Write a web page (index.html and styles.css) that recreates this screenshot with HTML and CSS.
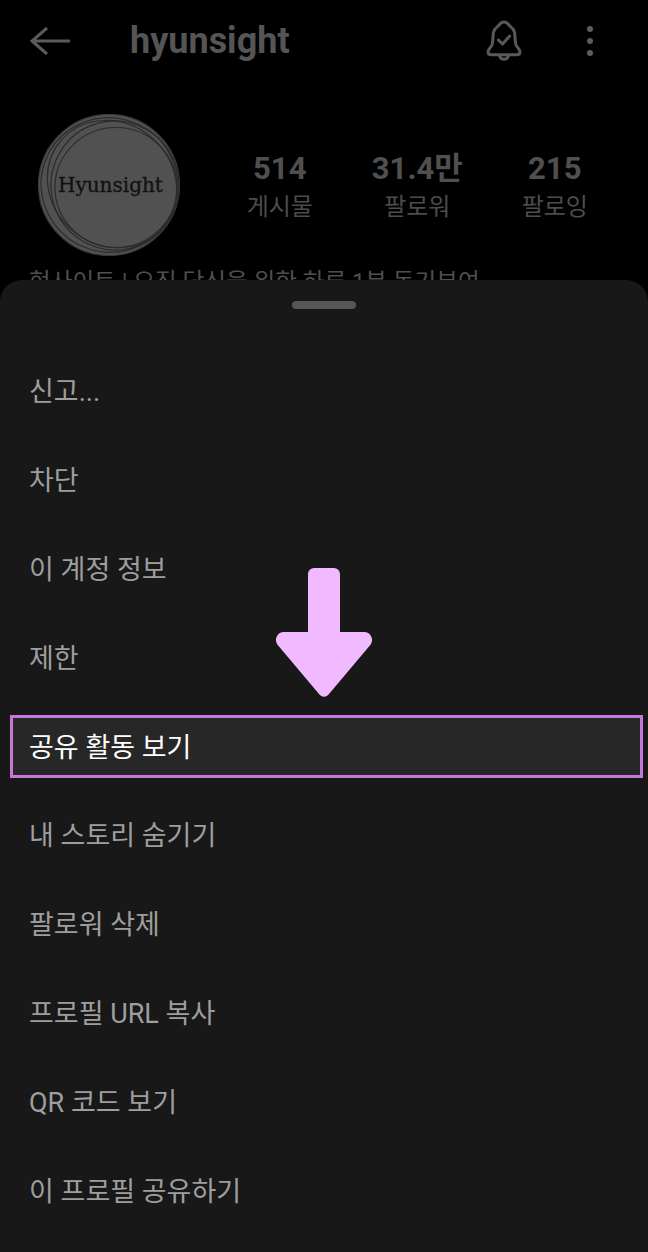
FILE: index.html
```html
<!DOCTYPE html>
<html lang="ko">
<head>
<meta charset="utf-8">
<title>hyunsight</title>
<link rel="stylesheet" href="styles.css">
</head>
<body>
<div class="screen">
  <header class="topbar">
    <svg class="back" viewBox="0 0 42 32" width="42" height="32"><path d="M18 3 3 16l15 13M3 16h38"/></svg>
    <h1 class="name">hyunsight</h1>
    <svg class="bell" viewBox="0 0 36 42" width="36" height="42"><path d="M18 2c-2 0-3.500 1-4.800 3-1.700 2-5 3-5.800 7.500-.7 4.500-.2 9-1.400 12.500-.8 2.200-4 3.800-4 6.800 0 2 1.400 3 3.400 3h25.200c2 0 3.400-1 3.400-3 0-3-3.200-4.600-4-6.800-1.200-3.500-.7-8-1.400-12.500C27.800 8 24.500 7 22.800 5 21.500 3 20 2 18 2Z"/><path d="M13.500 35.500c.6 2.500 2.300 3.800 4.500 3.800s3.900-1.300 4.500-3.800"/><path d="m12.500 20 4 4 7-7.800"/></svg>
    <div class="dots"><i></i><i></i><i></i></div>
  </header>
  <section class="profile">
    <div class="avatar">
      <svg class="rings" viewBox="0 0 142 142" width="142" height="142"><circle cx="71" cy="71" r="70.500" class="disc"/><ellipse cx="78" cy="73.500" rx="61" ry="60"/><ellipse cx="77" cy="71.500" rx="64" ry="64.500" transform="rotate(-15 77 71.500)"/><ellipse cx="71.500" cy="71" rx="68.500" ry="67" transform="rotate(20 71.500 71)"/><ellipse cx="74" cy="70" rx="67" ry="61" transform="rotate(40 74 70)"/></svg>
      <span class="logo">Hyunsight</span>
    </div>
    <ul class="stats">
      <li class="stat"><b>514</b><span>게시물</span></li>
      <li class="stat"><b>31.4만</b><span>팔로워</span></li>
      <li class="stat"><b>215</b><span>팔로잉</span></li>
    </ul>
  </section>
  <p class="bio">현사이트 | 오직 당신을 위한 하루 1분 동기부여</p>

  <div class="sheet">
    <div class="handle"></div>
    <ul class="menu">
      <li class="item">신고...</li>
      <li class="item">차단</li>
      <li class="item">이 계정 정보</li>
      <li class="item">제한</li>
      <li class="item active"><span>공유 활동 보기</span></li>
      <li class="item">내 스토리 숨기기</li>
      <li class="item">팔로워 삭제</li>
      <li class="item">프로필 URL 복사</li>
      <li class="item">QR 코드 보기</li>
      <li class="item">이 프로필 공유하기</li>
    </ul>
  </div>

  <svg class="arrow" viewBox="0 0 96 130" width="96" height="130"><path d="M38 0h20a6 6 0 0 1 6 6v58h24a8 8 0 0 1 6.700 12.400L53 126a6 6 0 0 1-10 0L1.300 76.400A8 8 0 0 1 8 64h24V6a6 6 0 0 1 6-6Z"/></svg>
</div>
</body>
</html>
```
FILE: styles.css
```css
* { box-sizing: border-box; }
html, body { margin: 0; padding: 0; background: #000; }
ul { list-style: none; margin: 0; padding: 0; }
.screen {
  position: relative;
  width: 648px;
  height: 1252px;
  overflow: hidden;
  background: #000;
  font-family: Roboto, "Noto Sans CJK KR", sans-serif;
}
.topbar {
  display: flex;
  align-items: center;
  height: 82px;
  padding: 0 0 0 29px;
}
.back { fill: none; stroke: #5a5a5a; stroke-width: 3; flex: none; }
.name {
  margin: 0 0 0 59px;
  flex: 1;
  font-size: 36px;
  font-weight: 700;
  color: #555;
}
.bell { fill: none; stroke: #595959; stroke-width: 3; stroke-linejoin: round; stroke-linecap: round; flex: none; margin-right: 65px; margin-bottom: 1px; }
.dots { display: flex; flex-direction: column; gap: 6px; margin-right: 55px; }
.dots i { display: block; width: 6px; height: 6px; border-radius: 50%; background: #5c5c5c; }

.profile {
  display: flex;
  align-items: center;
  height: 142px;
  margin-top: 32px;
  padding-left: 38px;
}
.avatar { position: relative; width: 142px; height: 142px; flex: none; }
.rings { display: block; fill: none; stroke: #2c2c2c; stroke-width: 1.200; }
.rings .disc { fill: #515151; stroke: #3a3a3a; }
.logo {
  position: absolute;
  left: 20px;
  top: 59px;
  font-family: "DejaVu Serif", serif;
  font-size: 20px;
  -webkit-text-stroke: 0.3px #111;
  color: #111;
  line-height: 24px;
}
.stats { display: flex; margin-left: 31px; }
.stat { display: flex; flex-direction: column; align-items: center; width: 137.500px; margin-top: 4px; }
.stat b { font-size: 31px; font-weight: 700; line-height: 40px; color: #505050; }
.stat span { font-size: 24px; line-height: 36px; color: #4c4c4c; }
.bio {
  margin: 8px 0 0 29px;
  font-size: 23.600px;
  line-height: 36px;
  color: #4f4f4f;
  white-space: nowrap;
}

.sheet {
  position: absolute;
  left: 0;
  right: 0;
  top: 280px;
  bottom: 0;
  background: #181818;
  border-radius: 22px 22px 0 0;
}
.handle { width: 64px; height: 8px; margin: 21px auto 0; border-radius: 4px; background: #565656; }
.menu { margin-top: 36.500px; }
.item {
  position: relative;
  display: flex;
  align-items: center;
  height: 88.800px;
  padding-left: 29px;
  font-size: 27px;
  color: #9e9e9e;
}
.item span { position: relative; }
.item.active { color: #fff; }
.item.active::before {
  content: "";
  position: absolute;
  left: 10px;
  right: 5px;
  top: 14px;
  bottom: 11px;
  background: #272727;
  border: 3px solid #c678d8;
}
.arrow { position: absolute; left: 276px; top: 568px; fill: #f1b9ff; }
```
